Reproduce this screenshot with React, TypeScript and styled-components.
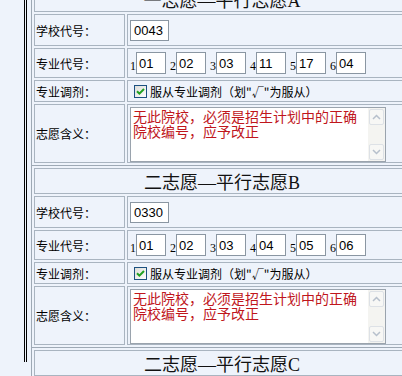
import * as React from 'react';
import styled, { createGlobalStyle } from 'styled-components';

type Choice = {
  title: string;
  school?: string;
  majors?: string[];
};

// the last block only shows its title inside the visible area
const choices: Choice[] = [
  { title: '一志愿—平行志愿A', school: '0043', majors: ['01', '02', '03', '11', '17', '04'] },
  { title: '二志愿—平行志愿B', school: '0330', majors: ['01', '02', '03', '04', '05', '06'] },
  { title: '二志愿—平行志愿C' },
];

function CheckIcon() {
  return (
    <svg width="13" height="13" viewBox="0 0 13 13">
      <defs>
        <linearGradient id="cb" x1="0" y1="0" x2="1" y2="1">
          <stop offset="0" stopColor="#dcdcd7" />
          <stop offset="1" stopColor="#ffffff" />
        </linearGradient>
      </defs>
      <rect x="0.5" y="0.5" width="12" height="12" fill="url(#cb)" stroke="#1c5180" />
      <path d="M3 6.2 L5.4 8.6 L10 4" fill="none" stroke="#21a121" strokeWidth="2" />
    </svg>
  );
}

function Arrow({ up }: { up?: boolean }) {
  return (
    <svg width="9" height="6" viewBox="0 0 9 6">
      <path
        d={up ? 'M1 5 L4.5 1.5 L8 5' : 'M1 1 L4.5 4.5 L8 1'}
        fill="none"
        stroke="#b7c0cc"
        strokeWidth="1.5"
      />
    </svg>
  );
}

function Section({ choice }: { choice: Choice }) {
  if (!choice.majors) {
    return <Header>{choice.title}</Header>;
  }
  return (
    <div>
      <Header>{choice.title}</Header>
      <Row $h={32}>
        <Label>学校代号：</Label>
        <Value>
          <SchoolBox>{choice.school}</SchoolBox>
        </Value>
      </Row>
      <Row $h={30}>
        <Label>专业代号：</Label>
        <Value>
          {choice.majors.map((m, i) => (
            <Major key={i}>
              <Digit>{i + 1}</Digit>
              <MajorBox>{m}</MajorBox>
            </Major>
          ))}
        </Value>
      </Row>
      <Row $h={22}>
        <Label>专业调剂：</Label>
        <Value>
          <Check>
            <CheckIcon />
            <span>服从专业调剂（划"√"为服从）</span>
          </Check>
        </Value>
      </Row>
      <Row $h={59}>
        <Label>志愿含义：</Label>
        <Value $top>
          <TextBox>
            <Message>
              <Line>无此院校，必须是招生计划中的正确</Line>
              <Line>院校编号，应予改正</Line>
            </Message>
            <Scrollbar>
              <ScrollBtn>
                <Arrow up />
              </ScrollBtn>
              <Track />
              <ScrollBtn>
                <Arrow />
              </ScrollBtn>
            </Scrollbar>
          </TextBox>
        </Value>
      </Row>
      <Divider />
    </div>
  );
}

export default function App() {
  return (
    <>
      <Global />
      <Page>
        <Frame>
          <Outer>
            {choices.map((c) => (
              <Section key={c.title} choice={c} />
            ))}
          </Outer>
        </Frame>
      </Page>
    </>
  );
}

const Global = createGlobalStyle`
  html, body {
    margin: 0;
    padding: 0;
    background: #eef3fb;
    overflow: hidden;
  }
`;

const Page = styled.div`
  width: 402px;
  height: 376px;
  overflow: hidden;
  background: #eef3fb;
  font-family: "Noto Sans CJK SC", sans-serif;
  color: #000;
`;

const Frame = styled.div`
  margin-left: 24px;
  border-left: 3px double #000;
  padding-left: 4px;
  height: 100%;
`;

const Outer = styled.div`
  margin-top: -16px;
  width: 378px;
  border-left: 1px solid #9ea9b5;
  min-height: 400px;
`;

const Header = styled.div`
  margin: 2px 0 0 2px;
  height: 26px;
  box-sizing: border-box;
  border: 1px solid #a9b4c0;
  display: flex;
  align-items: center;
  justify-content: center;
  font-family: "Liberation Serif", "Noto Sans CJK SC", serif;
  font-size: 18px;
  color: #111;
`;

const Row = styled.div<{ $h: number }>`
  display: flex;
  gap: 2px;
  margin: 2px 0 0 2px;
  height: ${(p) => p.$h}px;
`;

const Label = styled.div`
  width: 91px;
  flex: none;
  box-sizing: border-box;
  border: 1px solid #a9b4c0;
  display: flex;
  align-items: center;
  padding-left: 1px;
  font-size: 12px;
`;

const Value = styled.div<{ $top?: boolean }>`
  flex: 1;
  min-width: 0;
  box-sizing: border-box;
  border: 1px solid #a9b4c0;
  display: flex;
  align-items: ${(p) => (p.$top ? 'flex-start' : 'center')};
  padding: ${(p) => (p.$top ? '2px 0 0 2px' : '0 0 0 2px')};
`;

const SchoolBox = styled.div`
  width: 39px;
  height: 21px;
  box-sizing: border-box;
  border: 1px solid #8a96a2;
  background: #fff;
  padding-left: 3px;
  display: flex;
  align-items: center;
  font-family: "Liberation Sans", Arial, sans-serif;
  font-size: 13px;
`;

const Major = styled.div`
  display: flex;
  align-items: flex-end;
  margin-right: 4px;
`;

const Digit = styled.span`
  width: 6px;
  font-family: "Liberation Serif", serif;
  font-size: 12px;
  line-height: 14px;
  padding-bottom: 1px;
`;

const MajorBox = styled.div`
  width: 30px;
  height: 22px;
  box-sizing: border-box;
  border: 1px solid #8a96a2;
  background: #fff;
  padding-left: 2px;
  display: flex;
  align-items: center;
  font-family: "Liberation Sans", Arial, sans-serif;
  font-size: 13px;
`;

const Check = styled.label`
  display: flex;
  align-items: center;
  gap: 3px;
  padding-left: 4px;
  font-size: 12px;
`;

const TextBox = styled.div`
  width: 256px;
  height: 55px;
  box-sizing: border-box;
  border: 1px solid #9aa3ad;
  background: #fff;
  display: flex;
`;

const Message = styled.div`
  flex: 1;
  min-width: 0;
  padding: 1px 0 0 2px;
  display: flex;
  flex-direction: column;
  color: #c0161c;
`;

const Line = styled.div`
  height: 15px;
  font-size: 14px;
  line-height: 15px;
  white-space: nowrap;
`;

const Scrollbar = styled.div`
  width: 17px;
  flex: none;
  display: flex;
  flex-direction: column;
  background: #f4f4f1;
`;

const ScrollBtn = styled.div`
  height: 16px;
  box-sizing: border-box;
  margin: 1px;
  border: 1px solid #dde1e6;
  border-radius: 2px;
  background: #f7f7f5;
  display: flex;
  align-items: center;
  justify-content: center;
`;

const Track = styled.div`
  flex: 1;
`;

const Divider = styled.div`
  margin-top: 2px;
  height: 1px;
  background: #9ea9b5;
`;
